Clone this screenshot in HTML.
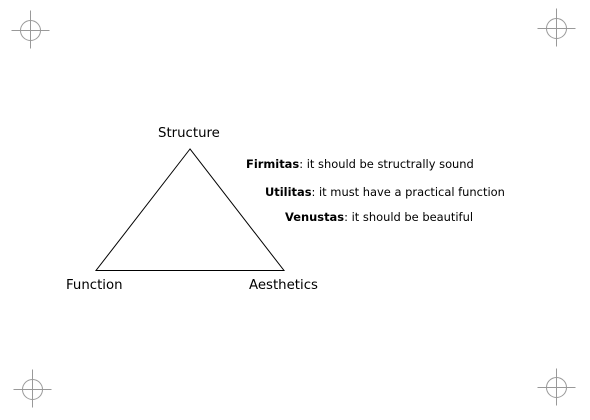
<!DOCTYPE html>
<html><head><meta charset="utf-8"><style>
html,body{margin:0;padding:0;background:#fff;width:590px;height:420px;overflow:hidden;position:relative}
.t{position:absolute;font-family:"DejaVu Sans","Liberation Sans",sans-serif;font-size:13.3px;color:#000;white-space:nowrap;line-height:1}
.s{position:absolute;font-family:"DejaVu Sans","Liberation Sans",sans-serif;font-size:11.45px;color:#000;white-space:nowrap;line-height:1}
</style></head><body>
<svg width="590" height="420" style="position:absolute;left:0;top:0" shape-rendering="crispEdges">
<g stroke="#999" stroke-width="1" fill="none">
<g transform="translate(30.5,30.5)"><line x1="-19" y1="0" x2="19" y2="0"/><line x1="0" y1="-20" x2="0" y2="18"/><circle r="10" shape-rendering="auto"/></g>
<g transform="translate(556.5,28.5)"><line x1="-19" y1="0" x2="19" y2="0"/><line x1="0" y1="-20" x2="0" y2="18"/><circle r="10" shape-rendering="auto"/></g>
<g transform="translate(32.5,389.5)"><line x1="-19" y1="0" x2="19" y2="0"/><line x1="0" y1="-20" x2="0" y2="18"/><circle r="10" shape-rendering="auto"/></g>
<g transform="translate(556.5,387.5)"><line x1="-19" y1="0" x2="19" y2="0"/><line x1="0" y1="-19" x2="0" y2="18"/><circle r="10" shape-rendering="auto"/></g>
</g>
<polygon points="190,149 96,270.5 284,270.5" fill="none" stroke="#000" stroke-width="1" shape-rendering="auto"/>
</svg>
<div class="t" style="left:158px;top:127px">Structure</div>
<div class="t" style="left:66px;top:279px">Function</div>
<div class="t" style="left:249px;top:279px">Aesthetics</div>
<div class="s" style="left:246px;top:159px"><b>Firmitas</b>: it should be structrally sound</div>
<div class="s" style="left:265px;top:187px"><b>Utilitas</b>: it must have a practical function</div>
<div class="s" style="left:285px;top:212px"><b>Venustas</b>: it should be beautiful</div>
</body></html>
